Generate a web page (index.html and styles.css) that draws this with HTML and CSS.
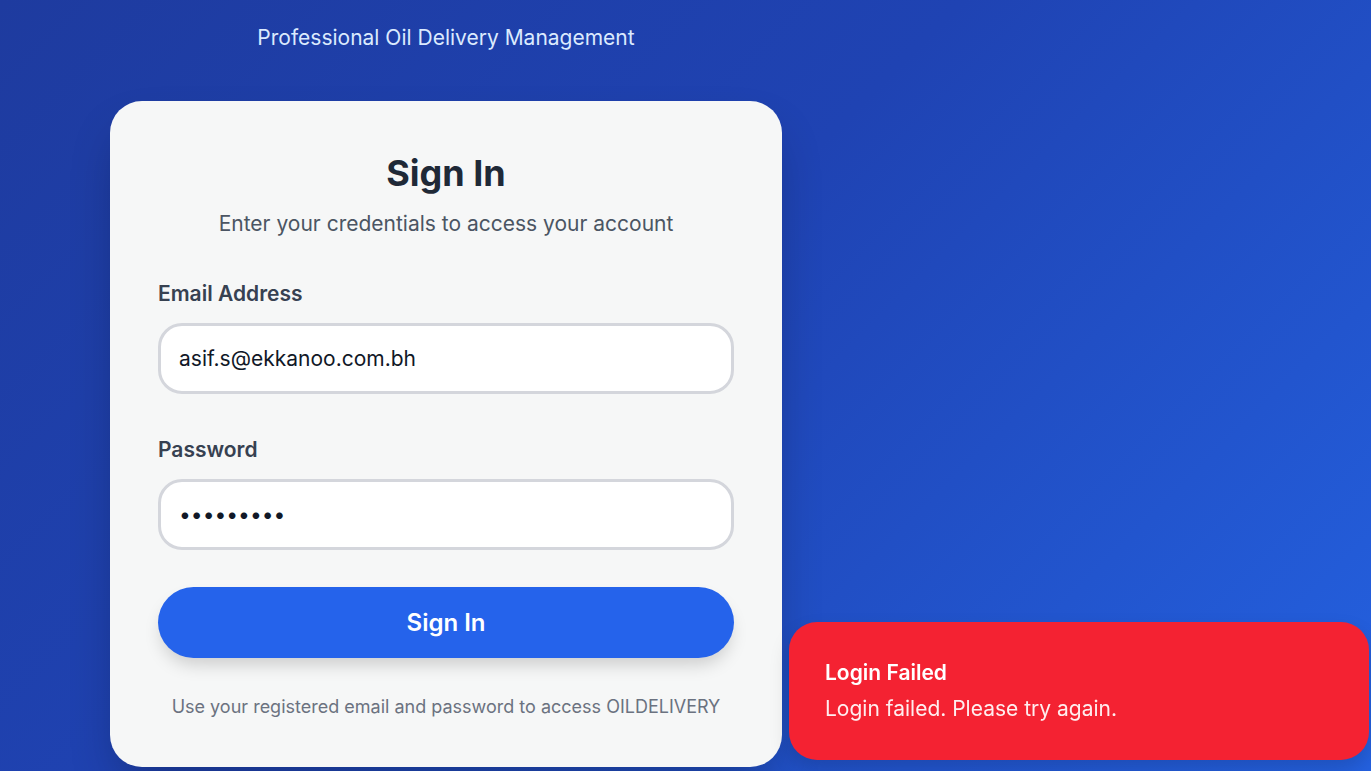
FILE: index.html
```html
<!DOCTYPE html>
<html lang="en">
<head>
<meta charset="utf-8">
<title>Sign In - OILDELIVERY</title>
<link rel="stylesheet" href="styles.css">
</head>
<body>
<main class="page">
  <section class="column">
    <p class="tagline">Professional Oil Delivery Management</p>
    <div class="card">
      <h1 class="card-title">Sign In</h1>
      <p class="card-sub">Enter your credentials to access your account</p>
      <form class="form">
        <div class="field">
          <label class="label" for="email">Email Address</label>
          <input class="input" id="email" type="email" value="asif.s@ekkanoo.com.bh">
        </div>
        <div class="field">
          <label class="label" for="password">Password</label>
          <input class="input input-pass" id="password" type="password" value="123456789">
        </div>
        <button class="btn" type="button">Sign In</button>
      </form>
      <p class="footnote">Use your registered email and password to access OILDELIVERY</p>
    </div>
  </section>
</main>
<div class="toast" role="alert">
  <div class="toast-title">Login Failed</div>
  <div class="toast-body">Login failed. Please try again.</div>
</div>
</body>
</html>
```

FILE: styles.css
```css
* { box-sizing: border-box; }
html, body { margin: 0; padding: 0; height: 100%; }
body {
  font-family: Inter, "Noto Sans", sans-serif;
  background: linear-gradient(135deg, #1e3b9f 0%, #1f43b3 45%, #2461e0 100%);
  overflow: hidden;
}
.page {
  padding: 23px 0 0 110px;
}
.column {
  width: 672px;
  display: flex;
  flex-direction: column;
  align-items: stretch;
}
.tagline {
  margin: 0;
  text-align: center;
  color: #dbeafe;
  font-size: 21px;
  line-height: 30px;
}
.card {
  margin-top: 48px;
  background: #f6f7f7;
  border-radius: 32px;
  padding: 49px 48px 47px;
  box-shadow: 0 25px 50px -12px rgba(0, 0, 0, 0.3);
  display: flex;
  flex-direction: column;
}
.card-title {
  margin: 0;
  text-align: center;
  font-size: 36px;
  line-height: 47px;
  font-weight: 700;
  color: #1f2937;
}
.card-sub {
  margin: 12px 0 0;
  text-align: center;
  font-size: 21px;
  line-height: 30px;
  color: #4b5563;
}
.form {
  margin-top: 41px;
  display: flex;
  flex-direction: column;
}
.field {
  display: flex;
  flex-direction: column;
  margin-bottom: 42px;
}
.field + .field { margin-bottom: 37px; }
.label {
  font-size: 21px;
  line-height: 28px;
  font-weight: 600;
  color: #374151;
  margin-bottom: 15px;
}
.input {
  height: 71px;
  border: 3px solid #d4d6dc;
  border-radius: 24px;
  background: #ffffff;
  padding: 0 18px;
  font-family: Inter, "Noto Sans", sans-serif;
  font-size: 21px;
  color: #111827;
  outline: none;
}
.input-pass {
  height: 71px;
  letter-spacing: 0;
}
.btn {
  height: 71px;
  border: none;
  border-radius: 36px;
  background: #2563eb;
  color: #ffffff;
  font-family: Inter, "Noto Sans", sans-serif;
  font-size: 24px;
  font-weight: 600;
  box-shadow: 0 10px 18px -4px rgba(0, 0, 0, 0.18);
  cursor: pointer;
}
.footnote {
  margin: 36px 0 0;
  text-align: center;
  font-size: 18px;
  line-height: 26px;
  color: #6b7280;
}
.toast {
  position: fixed;
  left: 789px;
  top: 622px;
  width: 580px;
  height: 138px;
  background: #f42232;
  border-radius: 28px;
  padding: 37px 36px;
  box-shadow: 0 10px 20px rgba(0, 0, 0, 0.15);
  color: #ffffff;
}
.toast-title {
  font-size: 21px;
  line-height: 28px;
  font-weight: 600;
}
.toast-body {
  margin-top: 8px;
  font-size: 21px;
  line-height: 28px;
  color: rgba(255, 255, 255, 0.92);
}
```
